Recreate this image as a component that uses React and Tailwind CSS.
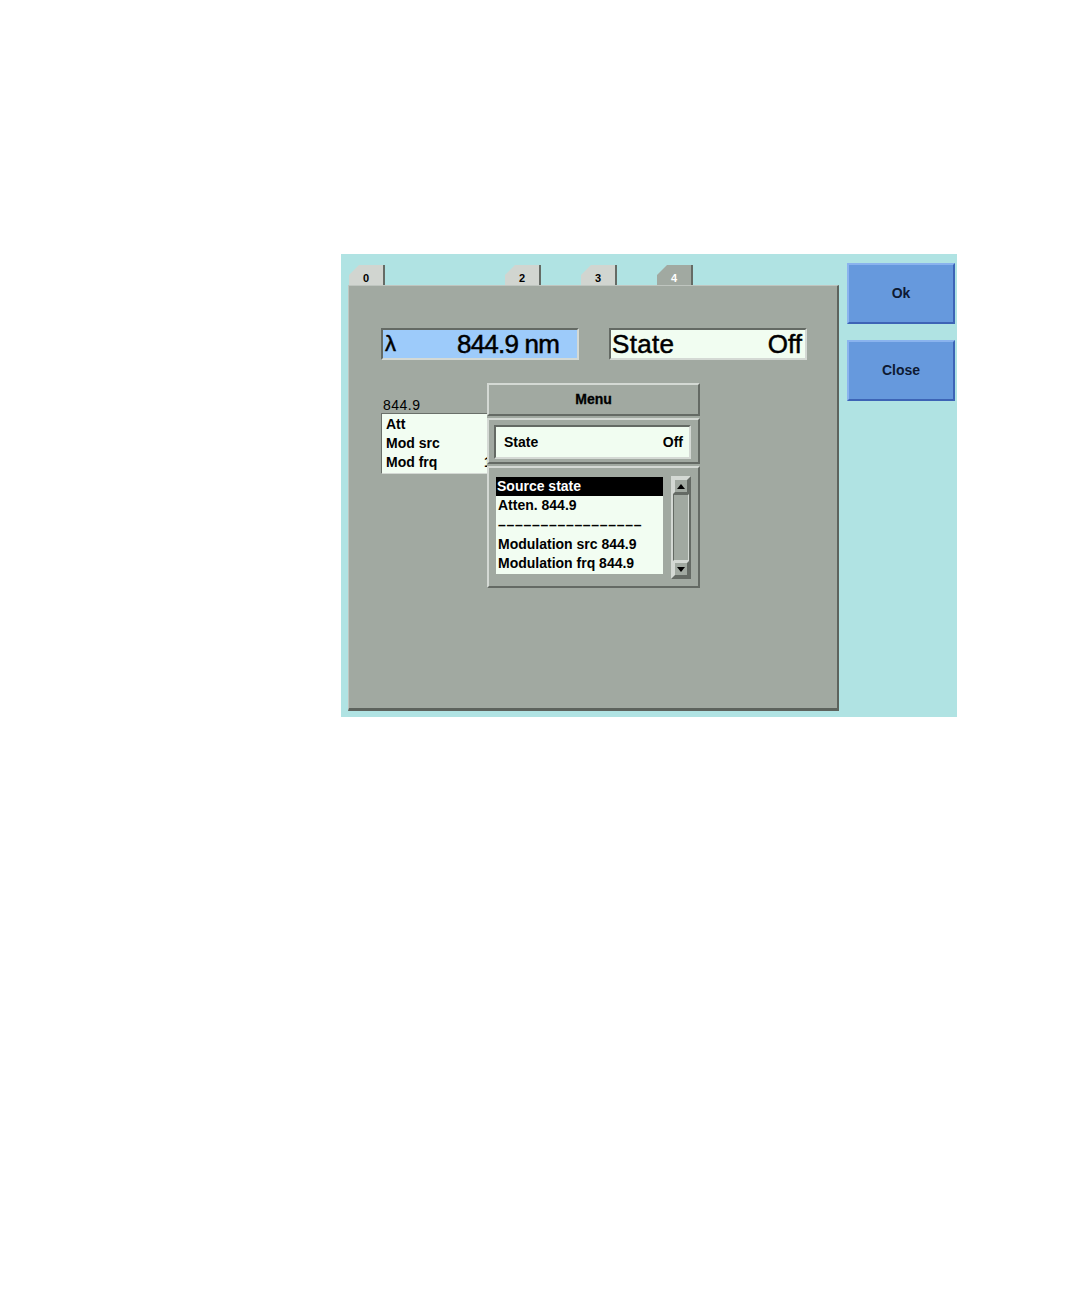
import React from 'react'

const raised = 'border-2 border-t-[#d4d9d4] border-l-[#d4d9d4] border-b-[#646a64] border-r-[#646a64]'
const sunken = 'border-2 border-t-[#646a64] border-l-[#646a64] border-b-[#d4d9d4] border-r-[#d4d9d4]'

const Tab = ({ label, selected, className }) => (
  <div
    className={`w-[36px] h-[20px] flex items-end justify-center leading-[13px] text-[11px] font-bold border-r-2 border-r-[#656b65] [clip-path:polygon(10px_0,100%_0,100%_100%,0_100%,0_10px)] ${
      selected ? 'bg-[#a1a9a1] text-white' : 'bg-[#d1d5d0] text-black'
    } ${className || ''}`}
  >
    {label}
  </div>
)

const Arrow = ({ down }) => (
  <svg width="8" height="5" viewBox="0 0 8 5">
    {down ? <polygon points="0,0 8,0 4,5" fill="#000" /> : <polygon points="4,0 8,5 0,5" fill="#000" />}
  </svg>
)

const menuItems = ['Atten. 844.9', '–––––––––––––––––', 'Modulation src 844.9', 'Modulation frq 844.9']

export default function App() {
  return (
    <div className="min-h-[1296px] bg-white font-['Liberation_Sans',Arial,sans-serif] pt-[254px] pl-[341px]">
      <div className="w-[616px] h-[463px] bg-[#b0e3e3] flex">
        {/* left: tabs and panel */}
        <div className="w-[498px] pl-[7px] pt-[11px] flex flex-col">
          <div className="flex">
            <Tab label="0" className="ml-[1px]" />
            <Tab label="2" className="ml-[120px]" />
            <Tab label="3" className="ml-[40px]" />
            <Tab label="4" selected className="ml-[40px]" />
          </div>
          <div className="relative w-[491px] h-[426px] bg-[#a1a9a1] border-t border-l border-t-[#bfc5bf] border-l-[#bfc5bf] border-r-2 border-b-[3px] border-r-[#5d635d] border-b-[#5d635d] pt-[42px] pl-[32px]">
            <div className="flex gap-[30px]">
              <div className={`w-[198px] h-[32px] bg-[#9dcbfa] ${sunken} flex items-center justify-between pl-[2px] pr-[18px]`}>
                <span className="text-[22px] leading-none [-webkit-text-stroke:0.5px_#000]">λ</span>
                <span className="text-[26px] leading-none tracking-[-0.8px] [-webkit-text-stroke:0.5px_#000]">844.9 nm</span>
              </div>
              <div className={`w-[198px] h-[32px] bg-[#f1fdf1] ${sunken} flex items-center justify-between pl-[1px] pr-[3px]`}>
                <span className="text-[26px] leading-none tracking-[0.3px] [-webkit-text-stroke:0.5px_#000]">State</span>
                <span className="text-[26px] leading-none [-webkit-text-stroke:0.5px_#000]">Off</span>
              </div>
            </div>

            <div className="mt-[37px] text-[14px] leading-[16px] tracking-[0.5px] pl-[2px]">844.9</div>
            <div className="w-[200px] h-[61px] bg-[#f2fdf2] border border-t-[#6a706a] border-l-[#6a706a] border-b-[#d4d9d4] border-r-[#d4d9d4] pt-px pl-[4px] text-[14px] font-bold leading-[19px]">
              <div>Att</div>
              <div>Mod src</div>
              <div className="flex">
                <span className="w-[98px]">Mod frq</span>
                <span>1 kHz</span>
              </div>
            </div>

            {/* popup menu */}
            <div className="absolute left-[138px] top-[97px] w-[213px] h-[205px] bg-[#a1a9a1] flex flex-col gap-[2px]">
              <div className={`h-[33px] ${raised} flex items-center justify-center text-[14px] font-bold [-webkit-text-stroke:0.3px_#000]`}>Menu</div>
              <div className={`h-[46px] ${raised} pl-[5px] pt-[5px]`}>
                <div className={`w-[197px] h-[34px] bg-[#f1fdf1] ${sunken} flex items-center justify-between pl-[8px] pr-[6px] text-[14px] font-bold`}>
                  <span>State</span>
                  <span>Off</span>
                </div>
              </div>
              <div className={`h-[122px] ${raised} flex pl-[7px] pt-[8px]`}>
                <div className="w-[167px] h-[97px] mt-px bg-[#f2fdf2] text-[14px] font-bold leading-[19.3px]">
                  <div className="bg-black text-white pl-px">Source state</div>
                  {menuItems.map((item, i) => (
                    <div key={i} className={`pl-[2px] ${i === 1 ? 'tracking-[0.7px]' : ''}`}>
                      {item}
                    </div>
                  ))}
                </div>
                <div className={`ml-[8px] w-[20px] h-[103px] ${raised} flex flex-col bg-[#a1a9a1]`}>
                  <div className={`h-[16px] ${raised} flex items-center justify-center`}>
                    <Arrow />
                  </div>
                  <div className="flex-1 border border-t-[#646a64] border-l-[#646a64] border-b-[#d4d9d4] border-r-[#d4d9d4]" />
                  <div className={`h-[16px] ${raised} flex items-center justify-center`}>
                    <Arrow down />
                  </div>
                </div>
              </div>
            </div>
          </div>
        </div>

        {/* right: buttons */}
        <div className="pl-[8px] pt-[9px] flex flex-col gap-[16px]">
          <button className="w-[108px] h-[61px] bg-[#6699dd] border-2 border-t-[#8ab3ee] border-l-[#8ab3ee] border-b-[#3d64b6] border-r-[#3d64b6] text-[14px] font-bold text-[#0e1a33]">
            Ok
          </button>
          <button className="w-[108px] h-[61px] bg-[#6699dd] border-2 border-t-[#8ab3ee] border-l-[#8ab3ee] border-b-[#3d64b6] border-r-[#3d64b6] text-[14px] font-bold text-[#0e1a33]">
            Close
          </button>
        </div>
      </div>
    </div>
  )
}
